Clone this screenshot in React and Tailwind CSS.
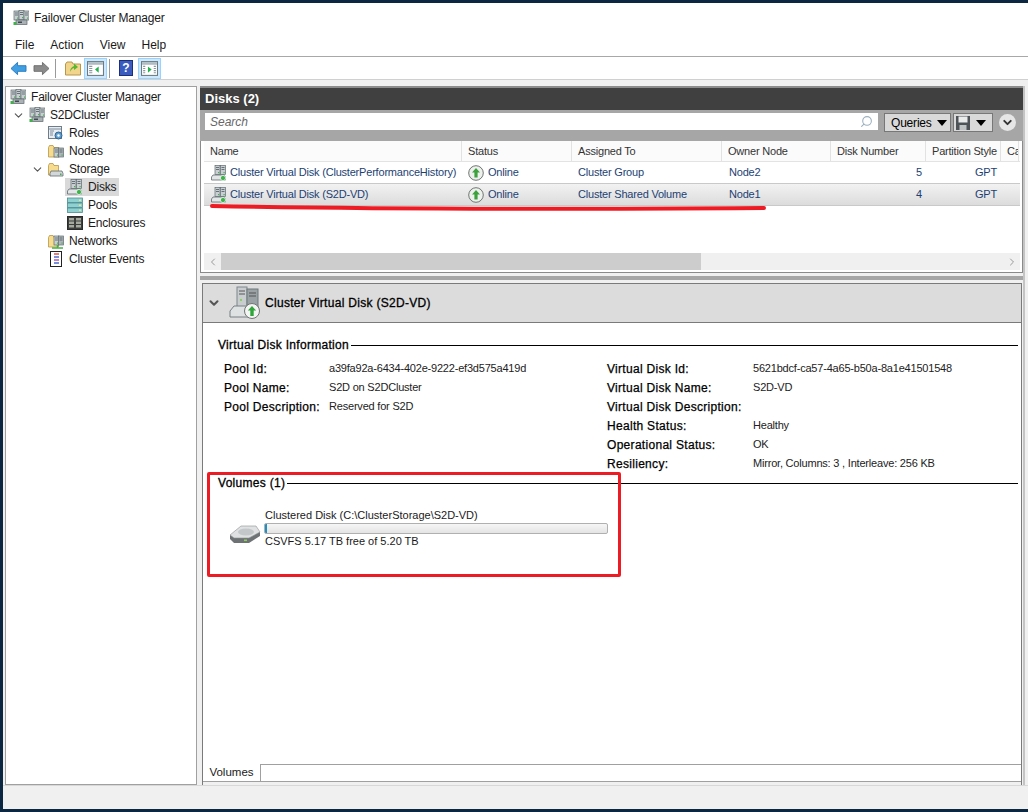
import React from 'react';
import { ChevronDown, ChevronLeft, ChevronRight, Search } from 'lucide-react';

// small hand drawn MMC style icons
const ServerBlock = ({ x, y, fill = '#c9ced2' }) => (
  <g>
    <rect x={x} y={y} width="5" height="9" fill={fill} stroke="#5f6b70" strokeWidth="0.7" />
    <path d={`M${x + 1} ${y + 2}h3M${x + 1} ${y + 4}h3`} stroke="#4c5a60" strokeWidth="0.8" />
    <rect x={x + 3} y={y + 6.5} width="1.2" height="1.2" fill="#3fb24a" />
  </g>
);

const ClusterIcon = () => (
  <svg viewBox="0 0 16 16" className="w-4 h-4 shrink-0">
    <ServerBlock x={1} y={1} />
    <ServerBlock x={6} y={0.5} />
    <ServerBlock x={11} y={1} />
    <rect x="3" y="10" width="11" height="4.5" fill="#aab2b6" stroke="#5c666b" strokeWidth="0.7" />
    <rect x="5" y="11.5" width="4" height="1.5" fill="#3f4a50" />
    <rect x="0.5" y="12" width="3" height="3" fill="#3fb24a" />
  </svg>
);

const FolderBack = () => (
  <path d="M0.5 4.5V14h10V4.5H6L5 2.5H1.5z" fill="#f6dc8c" stroke="#b8964a" strokeWidth="0.8" />
);

const RolesIcon = () => (
  <svg viewBox="0 0 16 16" className="w-4 h-4 shrink-0">
    <rect x="0.5" y="1.5" width="13" height="12" fill="#e8edf2" stroke="#6f7d8a" />
    <path d="M1 4h12M2 6h4M2 8h3M2 10h3" stroke="#7f8c99" />
    <circle cx="10.5" cy="10.5" r="3.5" fill="#5f9fd0" stroke="#32658f" />
    <circle cx="10.5" cy="10.5" r="1.2" fill="#fff" />
  </svg>
);

const NodesIcon = () => (
  <svg viewBox="0 0 16 16" className="w-4 h-4 shrink-0">
    <FolderBack />
    <ServerBlock x={6} y={5} />
    <ServerBlock x={10.5} y={5} fill="#aeb5ba" />
  </svg>
);

const StorageIcon = () => (
  <svg viewBox="0 0 16 16" className="w-4 h-4 shrink-0">
    <FolderBack />
    <path d="M3 10h11l1 2.5V15H2v-2.5z" fill="#d3d7d9" stroke="#5f6b70" strokeWidth="0.8" />
    <rect x="12" y="12.5" width="1.5" height="1.5" fill="#3fb24a" />
  </svg>
);

const DiskIcon = () => (
  <svg viewBox="0 0 16 16" className="w-4 h-4 shrink-0">
    <ServerBlock x={4} y={0.5} />
    <ServerBlock x={9.5} y={0.5} />
    <path d="M2 10h11l1.5 2v3H0.5v-3z" fill="#e3e5e6" stroke="#5f6b70" strokeWidth="0.8" />
    <circle cx="12" cy="13" r="2.6" fill="#3fb24a" stroke="#fff" strokeWidth="0.7" />
  </svg>
);

const PoolsIcon = () => (
  <svg viewBox="0 0 16 16" className="w-4 h-4 shrink-0">
    {[1, 6, 11].map((y) => (
      <g key={y}>
        <rect x="0.5" y={y} width="15" height="4.5" fill="#8fd0d0" stroke="#4b8c92" strokeWidth="0.8" />
        <rect x="12" y={y + 1.5} width="2" height="1.5" fill="#e4e59a" />
      </g>
    ))}
  </svg>
);

const EnclosureIcon = () => (
  <svg viewBox="0 0 16 16" className="w-4 h-4 shrink-0">
    <rect x="0.5" y="1.5" width="15" height="13" fill="#3c3f3c" stroke="#2a2a2a" />
    {[3, 6.5, 10].map((y) => (
      <g key={y}>
        <rect x="2" y={y} width="5" height="2.5" fill="#a6aa9e" />
        <rect x="9" y={y} width="5" height="2.5" fill="#a6aa9e" />
      </g>
    ))}
  </svg>
);

const NetworksIcon = () => (
  <svg viewBox="0 0 16 16" className="w-4 h-4 shrink-0">
    <FolderBack />
    <ServerBlock x={6} y={3} />
    <ServerBlock x={10.5} y={3} fill="#aeb5ba" />
    <path d="M4 15h11M9.5 12v3" stroke="#3fb24a" strokeWidth="1.4" />
  </svg>
);

const EventsIcon = () => (
  <svg viewBox="0 0 16 16" className="w-4 h-4 shrink-0">
    <rect x="2.5" y="0.5" width="11" height="15" fill="#fff" stroke="#222" />
    <path d="M2 2h1M2 4h1M2 6h1M2 8h1M2 10h1M2 12h1M2 14h1" stroke="#111" />
    <path d="M6 3h5" stroke="#d33" strokeWidth="1.3" />
    <path d="M6 6h5" stroke="#2c55c5" strokeWidth="1.3" />
    <path d="M6 9h5" stroke="#a13ab0" strokeWidth="1.3" />
    <path d="M6 12h5" stroke="#2c55c5" strokeWidth="1.3" />
  </svg>
);

const OnlineIcon = () => (
  <svg viewBox="0 0 16 16" className="w-4 h-4 shrink-0">
    <circle cx="8" cy="8" r="7.3" fill="#eef0ee" stroke="#6f7672" />
    <path d="M8 3l4 4.5H9.6V12.5H6.4V7.5H4z" fill="#3da23d" />
  </svg>
);

const BackArrow = () => (
  <svg viewBox="0 0 18 16" className="w-[17px] h-[15px] shrink-0">
    <path d="M1 8l7-6.5V5h9v6H8v3.5z" fill="#3f9fe2" stroke="#2a78bd" />
  </svg>
);

const ForwardArrow = () => (
  <svg viewBox="0 0 18 16" className="w-[17px] h-[15px] shrink-0">
    <path d="M17 8l-7-6.5V5H1v6h9v3.5z" fill="#8b8b8b" stroke="#6e6e6e" />
  </svg>
);

const UpFolder = () => (
  <svg viewBox="0 0 16 16" className="w-4 h-4 shrink-0">
    <path d="M0.5 4V15h15V4H8L7 2H2z" fill="#f2d48a" stroke="#b8964a" />
    <path d="M5 12c0-3 1.5-5 4-6V3.5L13 7l-4 3V8c-2 .5-3 2-4 4z" fill="#55b82f" />
  </svg>
);

const PaneIcon = ({ right }) => (
  <svg viewBox="0 0 16 16" className="w-[17px] h-[17px] shrink-0">
    <rect x="0.5" y="1.5" width="15" height="13" fill="#fff" stroke="#6d7a80" />
    <rect x="1" y="2" width="14" height="2.5" fill="#aebbc2" />
    {right ? (
      <>
        <path d="M2 6h2M2 8h2M2 10h2M2 12h2M12 6h2M12 8h2M12 10h2M12 12h2" stroke="#8a979e" />
        <path d="M6.5 6l3.5 3-3.5 3z" fill="#22b14c" />
      </>
    ) : (
      <>
        <path d="M2 6h3M2 8h3M2 10h3M2 12h3" stroke="#8a979e" />
        <path d="M11 6L7.5 9l3.5 3z" fill="#22b14c" />
      </>
    )}
  </svg>
);

const BigDiskIcon = () => (
  <svg viewBox="0 0 32 34" className="w-8 h-[34px] shrink-0">
    <rect x="8" y="1" width="10" height="20" fill="#c9cdcf" stroke="#7d878b" />
    <rect x="18" y="3" width="11" height="20" fill="#9aa2a5" stroke="#6c767a" />
    <path d="M10 5h6M10 8h6M20 7h7M20 10h7" stroke="#555" />
    <rect x="11" y="13" width="2" height="2" fill="#8bd05a" />
    <path d="M5 20h18l3 5v6H1v-6z" fill="#dfe2e3" stroke="#777f83" />
    <circle cx="23" cy="25" r="7.5" fill="#f3f4f3" stroke="#6f7672" />
    <path d="M23 20l4.2 4.6h-2.5V30h-3.4v-5.4h-2.5z" fill="#2fa53a" />
  </svg>
);

const HardDrive = () => (
  <svg viewBox="0 0 32 20" className="w-8 h-5 shrink-0">
    <path d="M1 11v4l4 4h15l11-7V8z" fill="#6e7274" />
    <path d="M1 11L12 2h15l4 6-11 6H5z" fill="#dfe1e2" stroke="#8b9092" strokeWidth="0.6" />
    <ellipse cx="17" cy="8" rx="8" ry="3.5" fill="#c4c7c9" />
    <rect x="15" y="15.5" width="3" height="1.6" fill="#8bd05a" />
  </svg>
);

const SaveIcon = () => (
  <svg viewBox="0 0 16 16" className="w-4 h-4 shrink-0">
    <path d="M1 1h14v14H1z" fill="#4d5356" />
    <rect x="3.5" y="1.5" width="9" height="6" fill="#e9eaea" />
    <rect x="4.5" y="10" width="7" height="5" fill="#bfc2c3" />
  </svg>
);

const HelpButton = () => (
  <span className="w-[14px] h-4 shrink-0 flex items-center justify-center bg-[#3a5cc0] border border-[#1d2f78] text-white font-bold text-[12px]">
    ?
  </span>
);

const Caret = () => <span className="w-0 h-0 border-x-[5px] border-x-transparent border-t-[6px] border-t-black" />;

const treeRows = [
  { label: 'Failover Cluster Manager', icon: <ClusterIcon />, pad: 'pl-[4px]' },
  { label: 'S2DCluster', icon: <ClusterIcon />, pad: 'pl-[7px]', open: true },
  { label: 'Roles', icon: <RolesIcon />, pad: 'pl-[42px]' },
  { label: 'Nodes', icon: <NodesIcon />, pad: 'pl-[42px]' },
  { label: 'Storage', icon: <StorageIcon />, pad: 'pl-[26px]', open: true },
  { label: 'Disks', icon: <DiskIcon />, pad: 'pl-[61px]', selected: true },
  { label: 'Pools', icon: <PoolsIcon />, pad: 'pl-[61px]' },
  { label: 'Enclosures', icon: <EnclosureIcon />, pad: 'pl-[61px]' },
  { label: 'Networks', icon: <NetworksIcon />, pad: 'pl-[42px]' },
  { label: 'Cluster Events', icon: <EventsIcon />, pad: 'pl-[42px]' },
];

const columns = 'grid grid-cols-[258px_110px_150px_109px_95px_75px_18px]';

const headers = ['Name', 'Status', 'Assigned To', 'Owner Node', 'Disk Number', 'Partition Style', 'Ca'];

const disks = [
  { name: 'Cluster Virtual Disk (ClusterPerformanceHistory)', assigned: 'Cluster Group', owner: 'Node2', num: 5 },
  { name: 'Cluster Virtual Disk (S2D-VD)', assigned: 'Cluster Shared Volume', owner: 'Node1', num: 4, selected: true },
];

const poolInfo = [
  ['Pool Id:', 'a39fa92a-6434-402e-9222-ef3d575a419d'],
  ['Pool Name:', 'S2D on S2DCluster'],
  ['Pool Description:', 'Reserved for S2D'],
];

const diskInfo = [
  ['Virtual Disk Id:', '5621bdcf-ca57-4a65-b50a-8a1e41501548'],
  ['Virtual Disk Name:', 'S2D-VD'],
  ['Virtual Disk Description:', ''],
  ['Health Status:', 'Healthy'],
  ['Operational Status:', 'OK'],
  ['Resiliency:', 'Mirror, Columns: 3 , Interleave: 256 KB'],
];

const SectionTitle = ({ children }) => (
  <div className="flex items-center gap-[2px] h-[18px]">
    <span className="text-black tracking-[0.3px] [-webkit-text-stroke:0.3px_black] whitespace-nowrap">{children}</span>
    <span className="flex-1 h-px bg-black" />
  </div>
);

const InfoRow = ({ k, v, keyWidth }) => (
  <div className={`grid h-[19px] items-center ${keyWidth}`}>
    <span className="text-black tracking-[0.3px] [-webkit-text-stroke:0.25px_black] whitespace-nowrap">{k}</span>
    <span className="text-[#222] text-[11px] tracking-[-0.2px] whitespace-nowrap">{v}</span>
  </div>
);

const App = () => {
  return (
    <div className="relative w-[1028px] h-[812px] overflow-hidden bg-[#0b2742] pt-[3px] pb-[3px] pl-[3px] font-['Liberation_Sans',Arial,sans-serif] text-[12px] text-[#1a1a1a]">
      <div className="h-full flex flex-col bg-[#f0f0f0]">
        <div className="h-[30px] bg-white flex items-center gap-[5px] pl-[10px] shrink-0">
          <ClusterIcon />
          <span className="tracking-[-0.17px]">Failover Cluster Manager</span>
        </div>
        <div className="h-[24px] bg-white flex items-center gap-[16px] pl-[12px] border-b border-[#a8a8a8] shrink-0">
          <span>File</span>
          <span>Action</span>
          <span>View</span>
          <span>Help</span>
        </div>
        <div className="h-[23px] flex items-center pl-[7px] bg-white border-b border-[#d0d0d0] shrink-0">
          <BackArrow />
          <span className="w-[6px]" />
          <ForwardArrow />
          <span className="w-px h-[19px] bg-[#9a9a9a] ml-[5px] mr-[9px]" />
          <UpFolder />
          <span className="w-[23px] h-[21px] ml-[3px] flex items-center justify-center bg-[#cce8ff] border border-[#99d1ff]">
            <PaneIcon />
          </span>
          <span className="w-px h-[19px] bg-[#9a9a9a] ml-[2px] mr-[9px]" />
          <HelpButton />
          <span className="w-[23px] h-[21px] ml-[5px] flex items-center justify-center bg-[#cce8ff] border border-[#99d1ff]">
            <PaneIcon right />
          </span>
        </div>

        <div className="flex-1 min-h-0 flex gap-[3px] pl-[2px] pr-[3px] pt-[6px]">
          {/* tree */}
          <div className="w-[192px] shrink-0 bg-white border border-[#a0a0a0] pt-px tracking-[-0.2px]">
            {treeRows.map((r) => (
              <div key={r.label} className={`h-[18px] flex items-center whitespace-nowrap ${r.pad}`}>
                {r.open && <ChevronDown size={13} strokeWidth={2} className="text-[#555] mr-[4px] -ml-px shrink-0" />}
                {r.selected ? (
                  <span className="flex items-center gap-[5px] bg-[#d9d9d9] pr-[3px] h-[18px] pl-[2px] -ml-[2px]">
                    {r.icon}
                    <span>{r.label}</span>
                  </span>
                ) : (
                  <span className="flex items-center gap-[5px]">
                    {r.icon}
                    <span>{r.label}</span>
                  </span>
                )}
              </div>
            ))}
          </div>

          {/* main pane */}
          <div className="flex-1 min-w-0 flex flex-col border-r-2 border-[#c4c4c4]">
            <div className="h-[24px] shrink-0 bg-[#404040] border-t-2 border-[#8c8c8c] flex items-center pl-[5px] text-white text-[13px] font-bold">
              Disks (2)
            </div>
            <div className="h-[31px] shrink-0 bg-[#a6a6a6] pt-[3px] pl-[5px] flex items-start">
              <div className="w-[673px] h-[17px] bg-white flex items-center justify-between px-[5px] italic text-[#666]">
                <span>Search</span>
                <Search size={13} className="text-[#9db0bd] -scale-x-100" />
              </div>
              <div className="ml-[6px] w-[67px] h-[19px] bg-[#d9d9d9] border border-[#777] flex items-center justify-between pl-[6px] pr-[3px] text-black tracking-[-0.2px]">
                <span>Queries</span>
                <Caret />
              </div>
              <div className="ml-[2px] w-[40px] h-[19px] bg-[#d9d9d9] border border-[#777] flex items-center justify-between pl-px pr-[6px]">
                <SaveIcon />
                <Caret />
              </div>
              <span className="ml-[6px] mt-px w-[17px] h-[17px] rounded-full bg-[#e6e6e6] flex items-center justify-center">
                <ChevronDown size={13} strokeWidth={3.5} className="text-[#333]" />
              </span>
            </div>

            {/* disks list */}
            <div className="h-[132px] shrink-0 bg-white border-x border-b border-[#8a8a8a] pl-[3px] pr-[2px] flex flex-col text-[11px] tracking-[-0.2px]">
              <div className={`${columns} h-[21px] shrink-0 bg-[#fbfbfb] border-b border-[#e3e3e3]`}>
                {headers.map((h) => (
                  <div key={h} className="flex items-center pl-[6px] border-r border-[#e2e2e2] whitespace-nowrap overflow-hidden text-[#333]">
                    {h}
                  </div>
                ))}
              </div>
              {disks.map((d) => (
                <div
                  key={d.name}
                  className={`${columns} h-[22px] shrink-0 items-center text-[#1d3f73] border-b border-[#c9c9c9] ${d.selected ? 'bg-gradient-to-b from-[#f2f2f2] to-[#dcdcdc]' : 'bg-white'}`}
                >
                  <div className="flex items-center gap-[3px] pl-[7px] whitespace-nowrap">
                    <DiskIcon />
                    <span>{d.name}</span>
                  </div>
                  <div className="flex items-center gap-[4px] pl-[6px]">
                    <OnlineIcon />
                    <span>Online</span>
                  </div>
                  <div className="pl-[6px] whitespace-nowrap">{d.assigned}</div>
                  <div className="pl-[7px]">{d.owner}</div>
                  <div className="text-right pr-[4px]">{d.num}</div>
                  <div className="pl-[49px]">GPT</div>
                  <div />
                </div>
              ))}
              <div className="flex-1" />
              <div className="h-[17px] mb-[2px] flex bg-[#f0f0f0] items-center">
                <span className="w-[17px] flex justify-center">
                  <ChevronLeft size={12} className="text-[#999]" />
                </span>
                <span className="w-[480px] h-full bg-[#cdcdcd]" />
                <span className="flex-1" />
                <span className="w-[17px] flex justify-center">
                  <ChevronRight size={12} className="text-[#999]" />
                </span>
              </div>
            </div>

            <div className="h-[4px] shrink-0 bg-[#a6a6a6] mt-[3px]" />
            <div className="flex-1 min-h-0 mt-[3px] mr-px flex flex-col bg-white border border-[#7a7a7a] ml-[2px] border-b-0">
              <div className="h-[39px] shrink-0 bg-[#dcdcdc] border-b border-[#7a7a7a] flex items-center pl-[4px]">
                <ChevronDown size={14} strokeWidth={3.5} className="text-[#555]" />
                <span className="ml-[8px]">
                  <BigDiskIcon />
                </span>
                <span className="ml-[4px] text-black tracking-[0.3px] [-webkit-text-stroke:0.3px_black]">Cluster Virtual Disk (S2D-VD)</span>
              </div>

              <div className="flex-1 min-h-0 pl-[15px] pr-[3px] pt-[13px]">
                <SectionTitle>Virtual Disk Information</SectionTitle>
                <div className="flex mt-[5px]">
                  <div className="w-[388px] shrink-0 pl-[6px]">
                    {poolInfo.map(([k, v]) => (
                      <InfoRow key={k} k={k} v={v} keyWidth="grid-cols-[105px_1fr]" />
                    ))}
                  </div>
                  <div className="flex-1 pl-px">
                    {diskInfo.map(([k, v]) => (
                      <InfoRow key={k} k={k} v={v} keyWidth="grid-cols-[146px_1fr]" />
                    ))}
                  </div>
                </div>
                <div className="mt-[1px]">
                  <SectionTitle>Volumes (1)</SectionTitle>
                </div>
                <div className="flex mt-[16px] pl-[11px] text-[11px]">
                  <span className="mt-[16px] shrink-0">
                    <HardDrive />
                  </span>
                  <div className="ml-[3px] w-[344px]">
                    <div className="h-[15px] pl-px flex items-center whitespace-nowrap">Clustered Disk (C:\ClusterStorage\S2D-VD)</div>
                    <div className="h-[11px] bg-gradient-to-b from-[#f6f6f6] to-[#e4e4e4] border border-[#b0b0b0] rounded-[2px] overflow-hidden">
                      <div className="h-full w-[2px] bg-[#1d8fc4]" />
                    </div>
                    <div className="h-[15px] pl-px flex items-center whitespace-nowrap">CSVFS 5.17 TB free of 5.20 TB</div>
                  </div>
                </div>
              </div>

              <div className="h-[18px] shrink-0 flex text-[11.5px]">
                <span className="w-[58px] border-r border-b border-[#a0a0a0] bg-white flex items-center justify-center">Volumes</span>
                <span className="flex-1 border-t border-b border-[#a0a0a0] bg-white" />
              </div>
              <div className="h-[3px] shrink-0 bg-[#f0f0f0]" />
            </div>
          </div>
        </div>

        <div className="h-[24px] shrink-0 bg-[#f0f0f0] border-t border-[#d8d8d8]" />
      </div>

      {/* red annotations drawn on the screenshot */}
      <svg className="absolute left-[205px] top-[200px] w-[570px] h-[14px]" viewBox="0 0 570 14">
        <path d="M7 6 C150 9 400 9 559 8" fill="none" stroke="#ed1c24" strokeWidth="4" strokeLinecap="round" />
      </svg>
      <div className="absolute left-[207px] top-[472px] w-[414px] h-[105px] border-[3.5px] border-[#ed1c24] rounded-[2px]" />
    </div>
  );
};

export default App;
